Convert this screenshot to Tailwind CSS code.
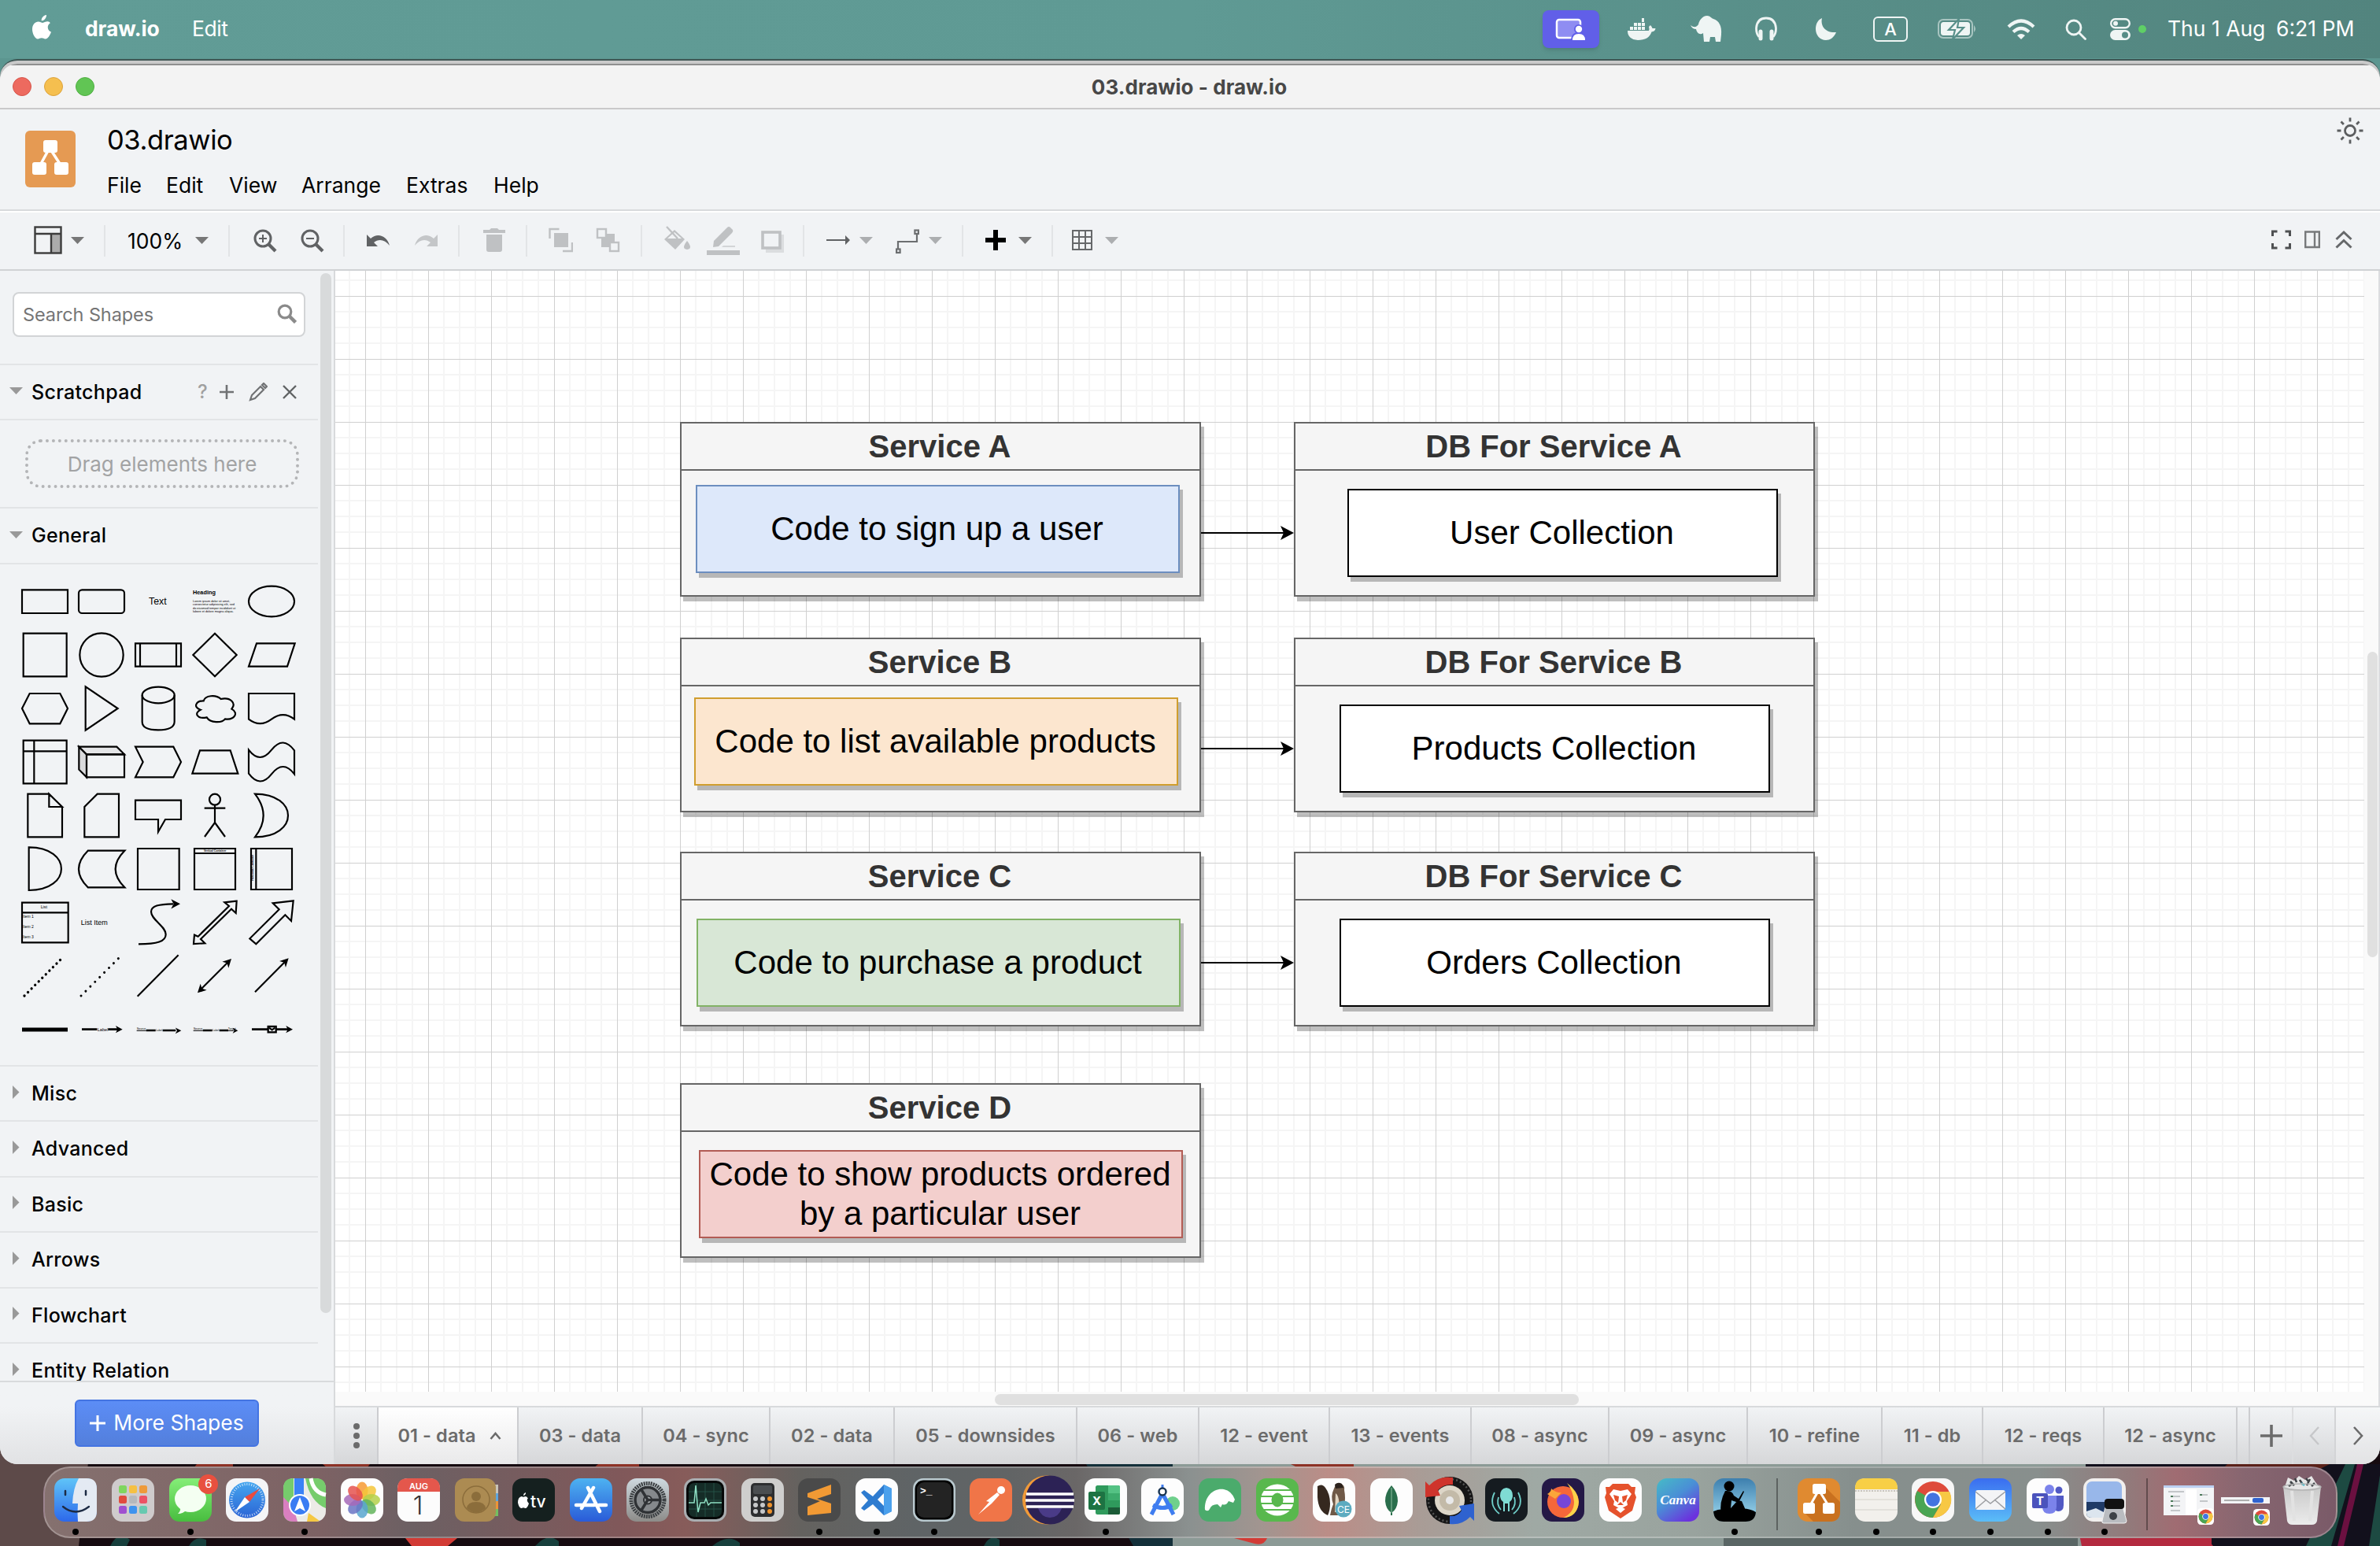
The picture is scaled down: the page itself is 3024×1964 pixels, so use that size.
<!DOCTYPE html>
<html lang="en">
<head>
<meta charset="utf-8">
<title>03.drawio - draw.io</title>
<script src="https://cdn.jsdelivr.net/npm/@tailwindcss/browser@4"></script>
</head>
<body class="relative flex h-[1964px] w-[3024px] flex-col overflow-hidden bg-[#1c0d12] font-['Inter',sans-serif]">

<!-- wallpaper -->
<svg class="absolute left-0 top-0" width="3024" height="1964" viewBox="0 0 3024 1964">
  <rect width="3024" height="1964" fill="#160b10"/>
  <rect width="3024" height="200" fill="#5c9690"/>
  <path d="M0 1700H130L100 1964H0z" fill="#5d4a49"/>
  <path d="M1480 1964V1860H2980V1964z" fill="#8c9a96"/>
  <path d="M1380 1860h110v104h-50z" fill="#14303a"/>
  <path d="M2190 1940h450v24h-450z" fill="#5a6665"/>
  <path d="M2640 1940h170v24h-165z" fill="#b32a3f"/><path d="M2730 1957q25-8 40 7h-40z" fill="#cf4a3a"/>
  <path d="M2650 1860h374v104h-214v-20h-160z" fill="#12101c"/>
  <path d="M2830 1860h130l-20 10h-120z" fill="#5a2119"/>
  <path d="M2930 1964l50-104h12l-30 104zM3010 1964l14-90v90z" fill="#1d4a42"/><path d="M2995 1860h8l-25 104h-8z" fill="#6b1040"/>
  <path d="M2650 1950h150l12 14H2656z" fill="#b32a3f"/>
  <g fill="#173f3c"><path d="M140 1964q10-20 25-8l-4 8zM240 1964q8-14 22-8v8zM680 1964q16-18 30-6v6zM905 1964q20-16 35-4v4zM1250 1964q8-16 20-8v8z"/></g>
  <path d="M515 1954h66l-12 10h-46z" fill="#d23b35"/><path d="M1568 1954h42q-4 10-16 7z" fill="#d23b35"/>
  <path d="M250 1860h46v5h-50zM410 1860h60l-4 5h-50zM760 1860h52v5h-58zM1640 1860h80v5h-70z" fill="#8d3226"/>
</svg>

<!-- menu bar -->
<header class="relative flex h-[74px] shrink-0 items-center bg-linear-to-r from-[#619c96] via-[#5f9a94] to-[#52847e] text-[26.5px] text-white">
  <svg class="ml-[40px] mb-[4px]" width="28" height="34" viewBox="0 0 28 34" fill="#fff"><path d="M19 1c.3 3.600-3 7.500-6.300 7.300C12.300 4.800 15.600 1.200 19 1zM23.800 11.200c-4.600 2.900-3.800 9.400 1.200 11.400-1.500 4.600-4.300 8.900-7.300 8.900-1.900 0-2.500-1.200-4.800-1.200-2.400 0-3.100 1.200-4.800 1.200C4.400 31.500 1 24.600 1 19c0-6 3.800-9.600 7.700-9.600 2.300 0 4 1.500 5.600 1.500 1.500 0 3.600-1.600 6.300-1.600 1.300 0 2.400.7 3.200 1.900z"/></svg>
  <span class="ml-[40px] w-[136px] font-bold tracking-[-0.1px]">draw.io</span>
  <span class="tracking-[-0.4px]">Edit</span>
  <div class="ml-auto mr-[33px] flex items-center">
    <div class="flex h-[48px] w-[72px] items-center justify-center rounded-[8px] bg-[#615fe8] shadow-md">
      <svg width="40" height="30" viewBox="0 0 40 30"><rect x="2" y="3" width="30" height="23" rx="3" fill="#8f8df2" stroke="#fff" stroke-width="2.500"/><circle cx="30" cy="15" r="6" fill="#615fe8"/><path d="M20 30q0-11 10-11t10 11z" fill="#615fe8"/><circle cx="30" cy="15" r="4.200" fill="#fff"/><path d="M22 29q0-8 8-8t8 8z" fill="#fff"/></svg>
    </div>
    <svg class="ml-[36px]" width="36" height="30" viewBox="0 0 36 30" fill="#eff5f4"><path d="M0 17h27q1-2 0-5l2-2q2 2 2.500 4h4q-.5 4-5 4.500Q27 29 13 29 0 28 0 17z"/><path d="M3 12h4v4H3zM8 12h4v4H8zM13 12h4v4h-4zM18 12h4v4h-4zM8 7h4v4H8zM13 7h4v4h-4zM18 7h4v4h-4zM18 1h3v5h-3z"/></svg>
    <svg class="ml-[44px]" width="40" height="34" viewBox="0 0 40 34" fill="#eff5f4"><path d="M0 12c5 4 8 2 10-1 1-5 5-11 11-11 4 0 5 3 8 4 7 2 11 9 10 20l-1 9h-6l-1-6h-6l-1 6h-7l-1-11c-4 3-8 0-9-5-3 0-6-2-7-5z"/></svg>
    <svg class="ml-[42px]" width="28" height="32" viewBox="0 0 28 32" fill="none" stroke="#eff5f4" stroke-width="2.800"><path d="M5 26Q1 21 1.600 14 3 2 14 2t12.400 12Q27 21 23 26"/><path d="M7 19v9M21 19v9" stroke-width="5" stroke-linecap="round"/></svg>
    <svg class="ml-[48px]" width="28" height="30" viewBox="0 0 28 30" fill="#eff5f4"><path d="M9 1C7 10 12 20 27 19 24 26 19 29 14 29 6 29 1 22 1 15 1 8 4 3 9 1z"/></svg>
    <div class="ml-[46px] flex h-[32px] w-[44px] items-center justify-center rounded-[6px] border-[2.500px] border-[#eff5f4] text-[22px] leading-none font-medium">A</div>
    <svg class="ml-[38px]" width="50" height="26" viewBox="0 0 50 26"><rect x="1" y="1" width="43" height="23" rx="6" fill="none" stroke="#a8c5c1" stroke-width="2"/><rect x="4" y="4" width="37" height="17" rx="3.500" fill="#eff5f4"/><path d="M46 8q4 4.500 0 9z" fill="#a8c5c1"/><path d="M27 0L14 14h8l-3 12 14-15h-8z" fill="#eff5f4" stroke="#58908a" stroke-width="2.200"/></svg>
    <svg class="ml-[38px]" width="36" height="27" viewBox="0 0 36 27" fill="none" stroke="#eff5f4" stroke-width="4.200"><path d="M2 10q16-15 32 0M8 16.500q10-9 20 0"/><path d="M18 26l-5-5q5-4 10 0z" fill="#eff5f4" stroke="none"/></svg>
    <svg class="ml-[38px]" width="27" height="27" viewBox="0 0 27 27" fill="none" stroke="#eff5f4" stroke-width="2.800"><circle cx="11" cy="11" r="9"/><path d="M17.500 17.500l8 8" stroke-linecap="round"/></svg>
    <svg class="ml-[30px]" width="26" height="28" viewBox="0 0 26 28"><rect x="1.200" y="1.200" width="23.600" height="11" rx="5.500" fill="none" stroke="#eff5f4" stroke-width="2.400"/><circle cx="7" cy="6.700" r="3" fill="#eff5f4"/><rect y="15" width="26" height="13" rx="6.500" fill="#eff5f4"/><circle cx="19" cy="21.500" r="4" fill="#568c86"/></svg>
    <span class="ml-[10px] h-[10px] w-[10px] rounded-full bg-[#5fcf66]"></span>
    <span class="ml-[27px] w-[138px] whitespace-nowrap">Thu 1 Aug</span>
    <span class="w-[99px] whitespace-nowrap">6:21 PM</span>
  </div>
</header>

<!-- window stacked behind -->
<div class="absolute top-[75px] left-0 h-[300px] w-[3024px] rounded-t-[22px] border-t-2 border-[#3f5654] bg-[#c9c9c9]"></div>

<!-- main window -->
<main class="relative mt-[7px] flex h-[1779px] w-full shrink-0 flex-col overflow-hidden rounded-[22px] bg-[#f1f3f5] text-black">
  <div class="relative flex h-[58px] shrink-0 items-center justify-center border-t-2 border-b-2 border-t-[#8f8f8f] border-b-[#c9c9ca] bg-[#f3f3f3]">
    <div class="absolute left-[16px] flex gap-[16px]">
      <span class="h-[24px] w-[24px] rounded-full border border-[#d6544a] bg-[#ed6a5f]"></span>
      <span class="h-[24px] w-[24px] rounded-full border border-[#dca23b] bg-[#f5bf4f]"></span>
      <span class="h-[24px] w-[24px] rounded-full border border-[#4fae41] bg-[#61c554]"></span>
    </div>
    <span class="mr-[2px] text-[26px] font-bold tracking-[0.050px] text-[#474747]">03.drawio - draw.io</span>
  </div>

  <div class="flex h-[129px] shrink-0 border-b-2 border-[#d8dadc]">
    <div class="mt-[27px] ml-[32px] h-[72px] w-[64px] rounded-[6px] bg-[#e59a53]">
      <svg width="64" height="72" viewBox="0 0 64 72" fill="#fff" stroke="#fff"><path d="M20 42L31 22l13 20" fill="none" stroke-width="3.500"/><rect x="23" y="12" width="18" height="16" rx="3" stroke="none"/><rect x="9" y="40" width="18" height="16" rx="3" stroke="none"/><rect x="37" y="40" width="18" height="16" rx="3" stroke="none"/></svg>
    </div>
    <div class="ml-[40px] flex flex-col">
      <div class="mt-[17px] text-[34.500px] leading-[44px] tracking-[-0.4px]">03.drawio</div>
      <nav class="mt-[17px] flex text-[26.500px] leading-[36px]">
        <span class="w-[75px]">File</span><span class="w-[80px]">Edit</span><span class="w-[92px]">View</span><span class="w-[133px]">Arrange</span><span class="w-[111px]">Extras</span><span>Help</span>
      </nav>
    </div>
    <svg class="mt-[9px] mr-[20px] ml-auto" width="36" height="36" viewBox="0 0 36 36" fill="none" stroke="#5c5e60" stroke-width="2.800"><circle cx="18" cy="18" r="6.500"/><path d="M18 1.500v5M18 29.500v5M1.500 18h5M29.500 18h5M6.500 6.500l3.400 3.400M26.100 26.100l3.400 3.400M29.500 6.500l-3.400 3.400M9.900 26.100l-3.400 3.400"/></svg>
  </div>

  <!-- toolbar -->
  <div class="flex h-[76px] shrink-0 items-center border-t-2 border-b-2 border-t-white border-b-[#d0d2d4] bg-[#f1f3f5]">
    <svg class="ml-[43px]" width="36" height="40" viewBox="0 0 36 40" fill="none" stroke="#3c3c3c" stroke-width="2.400"><rect x="22" y="11" width="12" height="24" fill="#ababab" stroke="none"/><rect x="1.500" y="2.500" width="33" height="33"/><path d="M2 11h32M22 11v24"/></svg>
    <svg class="ml-[11px]" width="17" height="10" viewBox="0 0 17 10" fill="#777"><path d="M0 0h17l-8.500 9z"/></svg>
    <i class="ml-[25px] h-[40px] w-[2px] bg-[#e2e4e6]"></i>
    <span class="ml-[28px] w-[86px] pt-[1px] text-[26.500px]">100%</span>
    <svg width="17" height="10" viewBox="0 0 17 10" fill="#777"><path d="M0 0h17l-8.500 9z"/></svg>
    <i class="ml-[25px] h-[40px] w-[2px] bg-[#e2e4e6]"></i>
    <svg class="ml-[29px]" width="32" height="40" viewBox="0 0 32 40" fill="none" stroke="#606264" stroke-width="3"><circle cx="13" cy="17" r="10"/><path d="M20 24l9 9" stroke-width="4.200"/><path d="M8 17h10M13 12v10" stroke-width="2"/></svg>
    <svg class="ml-[28px]" width="32" height="40" viewBox="0 0 32 40" fill="none" stroke="#606264" stroke-width="3"><circle cx="13" cy="17" r="10"/><path d="M20 24l9 9" stroke-width="4.200"/><path d="M8 17h10" stroke-width="2"/></svg>
    <i class="ml-[23px] h-[40px] w-[2px] bg-[#e2e4e6]"></i>
    <svg class="ml-[27px]" width="32" height="40" viewBox="0 0 32 40" fill="#606264"><path d="M1 12v15h14l-5-5c6-5 14-4 20 4C27 14 15 9 6 17z"/></svg>
    <svg class="ml-[28px]" width="32" height="40" viewBox="0 0 32 40" fill="#c4c6c8"><path d="M31 12v15H17l5-5c-6-5-14-4-20 4C5 14 17 9 26 17z"/></svg>
    <i class="ml-[25px] h-[40px] w-[2px] bg-[#e2e4e6]"></i>
    <svg class="ml-[28px]" width="32" height="40" viewBox="0 0 32 40" fill="#bfc1c3"><path d="M2 6h8l2-2h8l2 2h8v4H2zM6 12h20v19q0 3-3 3H9q-3 0-3-3z"/></svg>
    <i class="ml-[24px] h-[40px] w-[2px] bg-[#e2e4e6]"></i>
    <svg class="ml-[26px]" width="32" height="40" viewBox="0 0 32 40" fill="none" stroke="#bfc1c3" stroke-width="2.400"><rect x="8" y="10" width="18" height="18" fill="#bfc1c3" stroke="none"/><path d="M2.500 17V5h12M31 22v11H19"/></svg>
    <svg class="ml-[28px]" width="32" height="40" viewBox="0 0 32 40" fill="none" stroke="#bfc1c3" stroke-width="2.400"><rect x="8" y="11" width="17" height="17" fill="#bfc1c3" stroke="none"/><rect x="3" y="5" width="11" height="11" fill="#f1f3f5"/><rect x="19" y="22" width="11" height="11" fill="#f1f3f5"/></svg>
    <i class="ml-[26px] h-[40px] w-[2px] bg-[#e2e4e6]"></i>
    <svg class="ml-[26px]" width="36" height="40" viewBox="0 0 36 40" fill="#bfc1c3"><path d="M15 6l13 12-12 13L2 18z"/><path d="M15 9l9 8H6z" fill="#f1f3f5"/><path d="M5 2l14 15" stroke="#bfc1c3" stroke-width="2.400"/><path d="M31 20q8 10 0 11-8-1 0-11z"/></svg>
    <svg class="ml-[20px]" width="42" height="40" viewBox="0 0 42 40" fill="#bfc1c3"><path d="M8 28l1-8L26 3q2-2 4 0l3 3q1 2-1 4L15 27z"/><path d="M21 26h15v2H19z" opacity=".6"/><path d="M0 32h42v6H0z"/></svg>
    <svg class="ml-[25px]" width="32" height="40" viewBox="0 0 32 40"><path d="M8 12h23v23H8z" fill="#dbdddf"/><rect x="4" y="9" width="22" height="20" fill="#f1f3f5" stroke="#bfc1c3" stroke-width="3.600"/></svg>
    <i class="ml-[23px] h-[40px] w-[2px] bg-[#e2e4e6]"></i>
    <svg class="ml-[28px]" width="30" height="40" viewBox="0 0 30 40" fill="#606264"><path d="M0 18h24v2H0zM24 13l6 6-6 6z"/></svg>
    <svg class="ml-[12px]" width="17" height="10" viewBox="0 0 17 10" fill="#acaeb0"><path d="M0 0h17l-8.500 9z"/></svg>
    <svg class="ml-[29px]" width="30" height="40" viewBox="0 0 30 40" fill="none" stroke="#6c6e70" stroke-width="2.200"><path d="M3 30V21h24v-9"/><rect x="1.100" y="30.500" width="4.500" height="4.500"/><rect x="24.400" y="6.500" width="4.500" height="4.500"/></svg>
    <svg class="ml-[12px]" width="17" height="10" viewBox="0 0 17 10" fill="#acaeb0"><path d="M0 0h17l-8.500 9z"/></svg>
    <i class="ml-[25px] h-[40px] w-[2px] bg-[#e2e4e6]"></i>
    <svg class="ml-[28px]" width="26" height="40" viewBox="0 0 26 40" fill="#000"><path d="M0 16h10V6h6v10h10v6H16v10h-6V22H0z"/></svg>
    <svg class="ml-[16px]" width="17" height="10" viewBox="0 0 17 10" fill="#777"><path d="M0 0h17l-8.500 9z"/></svg>
    <i class="ml-[25px] h-[40px] w-[2px] bg-[#e2e4e6]"></i>
    <svg class="ml-[24px]" width="26" height="40" viewBox="0 0 26 40" fill="none" stroke="#66686a" stroke-width="2"><path d="M1 7h24v24H1zM1 15h24M1 23h24M9 7v24M17 7v24"/></svg>
    <svg class="ml-[16px]" width="17" height="10" viewBox="0 0 17 10" fill="#acaeb0"><path d="M0 0h17l-8.500 9z"/></svg>
    <svg class="ml-auto" width="25" height="40" viewBox="0 0 25 40" fill="none" stroke="#4e5052" stroke-width="3"><path d="M1.500 14V8h6M17.500 8h6v6M23.500 23v6h-6M7.500 29h-6v-6"/></svg>
    <svg class="ml-[17px]" width="20" height="40" viewBox="0 0 20 40" fill="none" stroke="#77797b" stroke-width="2.400"><path d="M1.200 8.500h17.600v19.500H1.200zM13 8v20"/></svg>
    <svg class="ml-[19px] mr-[35px]" width="22" height="40" viewBox="0 0 22 40" fill="none" stroke="#66686a" stroke-width="3"><path d="M1.500 18L11 9l9.500 9M1.500 28.500L11 19.500l9.500 9"/></svg>
  </div>

  <div class="flex min-h-0 flex-1">
    <!-- sidebar -->
    <aside class="flex w-[426px] shrink-0 flex-col border-r-2 border-[#d8dadc]">
      <div class="relative h-[1410px] overflow-hidden">
        <div class="w-[404px]">
          <div class="h-[118px] px-[16px] pt-[27px]">
            <div class="flex h-[57px] w-[372px] items-center justify-between rounded-[8px] border-2 border-[#d2d4d6] bg-white pr-[9px] pl-[11px] text-[23.500px] text-[#757575]">
              <span class="tracking-[-0.1px]">Search Shapes</span>
              <svg class="mb-[2px]" width="25" height="25" viewBox="0 0 25 25" fill="none" stroke="#8a8a8a" stroke-width="3.200"><circle cx="10" cy="10" r="7.800"/><path d="M15.500 15.500l8 8" stroke-width="4.500"/></svg>
            </div>
          </div>
          <div class="flex h-[70px] items-center border-t-2 border-[#e2e4e6]">
            <svg class="ml-[12px] mb-[2px]" width="17" height="10" viewBox="0 0 17 10" fill="#999"><path d="M0 0h17l-8.500 9z"/></svg>
            <span class="ml-[11px] w-[211px] pt-[1px] text-[25px] font-medium tracking-[0.3px]">Scratchpad</span>
            <span class="w-[28px] text-[24px] font-medium text-[#a0a0a0]">?</span>
            <svg width="18" height="18" viewBox="0 0 18 18" stroke="#707274" stroke-width="2.600"><path d="M9 0v18M0 9h18"/></svg>
            <svg class="ml-[19px]" width="24" height="24" viewBox="0 0 24 24" fill="none" stroke="#707274" stroke-width="2.200"><path d="M2 22l2-6L15 5l4 4L8 20zM17 3l2-2 4 4-2 2z"/></svg>
            <svg class="ml-[19px]" width="18" height="18" viewBox="0 0 18 18" stroke="#606264" stroke-width="2.400"><path d="M1 1l16 16M17 1L1 17"/></svg>
          </div>
          <div class="h-[112px] border-t-2 border-[#e2e4e6] pt-[24px] pl-[32px]">
            <div class="flex h-[62px] w-[348px] items-center justify-center rounded-[20px] border-4 border-dotted border-[#b4b5b7] pt-[1px] text-[26px] text-[#a2a3a4]">Drag elements here</div>
          </div>
          <div class="flex h-[71px] items-center border-t-2 border-[#e2e4e6]">
            <svg class="ml-[12px] mb-[2px]" width="17" height="10" viewBox="0 0 17 10" fill="#999"><path d="M0 0h17l-8.500 9z"/></svg>
            <span class="ml-[11px] pt-[1px] text-[25px] font-medium tracking-[0.3px]">General</span>
          </div>
          <div class="h-[638px] border-t-2 border-[#e2e4e6] pt-[13px] pl-[21px]">
            <div id="palette" class="grid w-[360px] grid-cols-5"></div>
          </div>
          <div id="sections"></div>
        </div>
        <div class="absolute top-[3px] left-[407px] h-[1321px] w-[14px] rounded-full bg-[#d8dadb]"></div>
      </div>
      <div class="flex flex-1 justify-center border-t-2 border-[#d8dadc] bg-linear-to-b from-[#f1f3f5] from-30% to-[#e1e2e4] pt-[22px]">
        <div class="flex h-[60px] w-[234px] items-center justify-center gap-[10px] rounded-[6px] border-2 border-[#4474e2] bg-linear-to-b from-[#5c8df6] to-[#537fdc] text-[26.500px] whitespace-nowrap text-white"><svg width="20" height="20" viewBox="0 0 20 20" stroke="#fff" stroke-width="3"><path d="M10 0v20M0 10h20"/></svg><span>More Shapes</span></div>
      </div>
    </aside>

    <!-- canvas column -->
    <section class="flex min-w-0 flex-1 flex-col">
      <div class="relative h-[1442px] shrink-0 overflow-hidden bg-[#fafafa]">
        <svg class="absolute top-0 left-0" width="2578" height="1424" viewBox="426 344 2578 1424">
          <defs>
            <pattern id="grid" x="864" y="536" width="80" height="80" patternUnits="userSpaceOnUse">
              <path d="M19 0h2v80h-2zM39 0h2v80h-2zM59 0h2v80h-2zM0 19h80v2H0zM0 39h80v2H0zM0 59h80v2H0z" fill="#f5f5f5"/>
              <path d="M0 0h80v1H0zM0 0h1v80H0z" fill="#d0d0d0"/>
            </pattern>
          </defs>
          <rect x="426" y="344" width="2578" height="1424" fill="#fff"/>
          <rect x="426" y="344" width="2578" height="1424" fill="url(#grid)"/>
          <g stroke="#000" stroke-width="2"><path d="M1526 677h108M1526 951h108M1526 1223h108"/></g>
          <g fill="#000"><path d="M1644 677l-17 9 4-9-4-9zM1644 951l-17 9 4-9-4-9zM1644 1223l-17 9 4-9-4-9z"/></g>
        </svg>
        <div id="diagram" class="font-['Liberation_Sans',sans-serif]"></div>
        <div class="absolute top-[1427px] left-[838px] h-[14px] w-[742px] rounded-full bg-[#e0e0e0]"></div>
        <div class="absolute top-[484px] left-[2582px] h-[388px] w-[13px] rounded-full bg-[#e0e0e0]"></div>
        <div class="absolute top-0 right-0 h-full w-[2px] bg-[#dcdddf]"></div>
      </div>
      <div class="flex flex-1 border-t-2 border-[#d8dadc] bg-linear-to-b from-[#f1f3f5] to-[#d6d7d9] text-[23.500px] font-semibold text-[#6b6b6b]">
        <div class="flex w-[55px] flex-col items-center justify-center gap-[4px] border-r-2 border-[#cccdd0]">
          <i class="h-[8px] w-[8px] rounded-full bg-[#6b6b6b]"></i><i class="h-[8px] w-[8px] rounded-full bg-[#6b6b6b]"></i><i class="h-[8px] w-[8px] rounded-full bg-[#6b6b6b]"></i>
        </div>
        <div id="tabs" class="flex"></div>
        <div class="w-[16px] border-r-2 border-[#cccdd0]"></div>
        <div class="flex w-[55px] items-center justify-center border-r-2 border-[#dddee0]"><svg width="28" height="28" viewBox="0 0 28 28" stroke="#6b6b6b" stroke-width="3.600"><path d="M14 0v28M0 14h28"/></svg></div>
        <div class="flex w-[54px] items-center justify-center border-r-2 border-[#d3d4d6]"><svg width="13" height="24" viewBox="0 0 13 24" fill="none" stroke="#c6c7c9" stroke-width="2.400"><path d="M12 1L2 12l10 11"/></svg></div>
        <div class="flex flex-1 items-center justify-center bg-white/30"><svg width="13" height="24" viewBox="0 0 13 24" fill="none" stroke="#6b6b6b" stroke-width="2.600"><path d="M1 1l10 11L1 23"/></svg></div>
      </div>
    </section>
  </div>
</main>

<!-- dock -->
<footer id="dock" class="relative mt-[3px] ml-[55px] flex h-[91px] w-[2915px] shrink-0 items-start rounded-[34px] border-2 border-white/25 bg-[linear-gradient(90deg,#85716f_0%,#7d6264_12%,#6c6063_16%,#80585a_25%,#875c5a_28%,#64625f_33%,#5f6466_38%,#616465_42%,#6a6767_45%,#8b9190_50%,#a19590_53%,#bb8d87_56%,#a99c96_60%,#9fa9a4_65%,#99a39e_72%,#868f8d_79%,#888f8d_87%,#927a7b_91%,#a06c72_93%,#876670_96%,#7a5a68_100%)] pt-[13px] pl-[3px]"></footer>

<script>
/* General palette: each entry is drawn in a 216x204 cell of a five column sheet */
const A = (x, y, a, s = 26) => `<path transform="translate(${x} ${y}) rotate(${a})" d="M0 0L${-s * 1.25} ${s * .65}L${-s * .9} 0L${-s * 1.25} ${-s * .65}z" fill="#000" stroke="none"/>`;
const T = (x, y, s, t, e = '') => `<text x="${x}" y="${y}" font-size="${s}" fill="#000" stroke="none" ${e}>${t}</text>`;
const shapes = [
  '<path d="M84 58h174v89H84z"/>',
  '<rect x="300" y="58" width="174" height="89" rx="13"/>',
  T(567, 114, 37, 'Text'),
  T(735, 75, 22, 'Heading', 'font-weight="700"') + T(735, 105, 11.5, 'Lorem ipsum dolor sit amet,') + T(735, 118, 11.5, 'consectetur adipisicing elit, sed') + T(735, 131, 11.5, 'do eiusmod tempor incididunt ut') + T(735, 144, 11.5, 'labore et dolore magna aliqua.'),
  '<ellipse cx="1035" cy="102" rx="87" ry="58"/>',
  '<path d="M89 224h165v164H89z"/>',
  '<circle cx="387" cy="306" r="83"/>',
  '<path d="M516 262h174v88H516zM534 262v88M672 262v88"/>',
  '<path d="M819 224l83 82-83 82-83-82z"/>',
  '<path d="M978 262h146l-29 88H948z"/>',
  '<path d="M84 510l29-57h116l29 57-29 58H113z"/>',
  '<path d="M326 427v166l123-83z"/>',
  '<path d="M542 459v102q0 31 61 31t62-31V459"/><ellipse cx="603.500" cy="459" rx="61.500" ry="31"/>',
  '<path d="M776 481C748 480 734 505 764 515 738 528 752 552 788 544 802 566 846 566 858 550 892 555 912 528 883 512 902 490 878 466 842 474 822 456 782 460 776 481z"/>',
  '<path d="M948 453h174v98q-43-33-87 0t-87 0z"/>',
  '<path d="M89 632h165v164H89zM130 632v164M89 673h165"/>',
  '<path d="M301 656l29 29v87l-29-29z" fill="#d9dadc"/><path d="M301 656h144l29 29H330z" fill="#e4e5e7"/><path d="M330 685h144v87H330z"/>',
  '<path d="M516 656h145l29 58-29 58H516l29-58z"/>',
  '<path d="M762 670h116l29 88H733z"/>',
  '<path d="M948 668q43 56 87 0t87 2v90q-43-56-87 0t-87-2z"/>',
  '<path d="M106 836h81l50 49v115H106zM187 836v49h50z"/>',
  '<path d="M371 836h82v164H322V885z"/>',
  '<path d="M516 860h174v73h-60l-27 47v-47h-87z"/>',
  '<circle cx="819" cy="857" r="21"/><path d="M819 878v67M779 890h80M819 945l-39 54M819 945l39 54"/>',
  '<path d="M972 836C1140 836 1140 1000 972 1000Q1036 918 972 836z"/>',
  '<path d="M110 1039C275 1039 275 1203 110 1203z"/>',
  '<path d="M335 1052h140q-70 70 0 140H335q-70-70 0-140z"/>',
  '<path d="M525 1044h158v156H525z"/>',
  '<path d="M741 1044h156v156H741zM741 1062h156"/>' + T(777, 1056, 10, 'Vertical Container', 'font-weight="700"'),
  '<path d="M957 1044h156v156H957zM976 1044v156"/>' + T(0, 0, 10, 'Horizontal Container', 'font-weight="700" transform="translate(967 1166) rotate(-90)"'),
  '<path d="M84 1250h176v152H84zM84 1288h176"/>' + T(155, 1271, 16, 'List') + T(87, 1308, 15, 'Item 1') + T(87, 1347, 15, 'Item 2') + T(87, 1386, 15, 'Item 3'),
  T(308, 1335, 27, 'List Item'),
  '<path d="M528 1408C600 1408 632 1398 632 1371 632 1340 576 1315 576 1285 576 1262 606 1256 660 1255"/>' + A(687, 1255, 0, 28),
  '<path d="M902 1244l-46 5 17 14-118 116-14-6-3 34 43-2-16-16 117-115 17 16z"/>',
  '<path d="M1118 1243l-78 9 24 24-112 111 24 21 111-111 23 23z"/>',
  '<path d="M93 1605L243 1455" stroke-width="10" stroke-linecap="round" stroke-dasharray=".1 19.200"/>',
  '<path d="M309 1605L452 1462" stroke-width="9" stroke-linecap="round" stroke-dasharray=".1 25"/>',
  '<path d="M524 1607L680 1450"/>',
  '<path d="M765 1581L870 1476"/>' + A(882, 1464, -45) + A(753, 1594, 135),
  '<path d="M972 1591L1088 1474"/>' + A(1100, 1462, -45),
  '<path d="M84 1734h174" stroke-width="15"/>',
  '<path d="M312 1733h58M412 1733h40" stroke-width="8"/>' + A(467, 1733, 0, 21) + T(371, 1740, 17, 'Label'),
  '<path d="M521 1738h36" stroke-width="3"/><path d="M557 1737h36M620 1737h50" stroke-width="8"/>' + A(691, 1738, 0, 18) + T(521, 1734, 11, 'Source') + T(594, 1740, 10, 'Label'),
  '<path d="M737 1738h36M870 1738h20" stroke-width="3"/><path d="M773 1737h36M836 1737h34" stroke-width="8"/>' + A(907, 1738, 0, 16) + T(737, 1734, 11, 'Source') + T(810, 1740, 10, 'Label') + T(869, 1734, 11, 'Target'),
  '<path d="M960 1733h140" stroke-width="8"/>' + A(1116, 1733, 0, 21) + '<rect x="1022" y="1722" width="30" height="22" fill="#f1f3f5" stroke-width="7"/><path d="M1026 1727l11 8 11-8"/>'
];
document.getElementById('palette').innerHTML = shapes.map((s, i) =>
  `<svg width="72" height="68" viewBox="${63 + 216 * (i % 5)} ${204 * Math.floor(i / 5)} 216 204" fill="none" stroke="#000" stroke-width="6.500" font-family="Liberation Sans">${s}</svg>`).join('');

document.getElementById('sections').innerHTML = ['Misc', 'Advanced', 'Basic', 'Arrows', 'Flowchart', 'Entity Relation'].map(t =>
  `<div class="flex h-[70.400px] items-center border-t-2 border-[#e2e4e6]"><svg class="ml-[16px] mb-[4px]" width="9" height="17" viewBox="0 0 9 17" fill="#999"><path d="M0 0v17l8.500-8.500z"/></svg><span class="ml-[15px] pt-[1px] text-[25px] font-medium tracking-[0.3px] whitespace-nowrap">${t}</span></div>`).join('');

/* Diagram containers: x, y, title, then the node inside: x, y, width, fill, stroke, label */
const boxes = [
  [864, 536, 'Service A', 884, 616, 615, '#dde8fa', '#6c8ebf', 'Code to sign up a user'],
  [864, 810, 'Service B', 882, 886, 615, '#fce6cf', '#d09e2f', 'Code to list available products'],
  [864, 1082, 'Service C', 885, 1167, 615, '#d8e7d6', '#82b366', 'Code to purchase a product'],
  [864, 1376, 'Service D', 888, 1461, 615, '#f3cfcd', '#b25c54', 'Code to show products ordered<br>by a particular user'],
  [1644, 536, 'DB For Service A', 1712, 621, 547, '#ffffff', '#000000', 'User Collection'],
  [1644, 810, 'DB For Service B', 1702, 895, 547, '#ffffff', '#000000', 'Products Collection'],
  [1644, 1082, 'DB For Service C', 1702, 1167, 547, '#ffffff', '#000000', 'Orders Collection']
];
document.getElementById('diagram').innerHTML = boxes.map(([x, y, t, ix, iy, iw, f, s, l]) =>
  `<div class="absolute h-[222px] w-[662px] border-2 border-[#666] bg-[#f5f5f5] shadow-[4px_6px_0_rgba(0,0,0,0.25)]" style="left:${x - 426}px;top:${y - 344}px"><div class="flex h-[60px] items-center justify-center border-b-2 border-[#666] pr-[2px] text-[40px] leading-[48px] font-bold text-[#333]">${t}</div></div>
   <div class="absolute flex h-[112px] items-center justify-center border-2 pr-[2px] text-center text-[42px] leading-[50px] whitespace-nowrap text-black shadow-[4px_6px_0_rgba(0,0,0,0.25)]" style="left:${ix - 426}px;top:${iy - 344}px;width:${iw}px;background:${f};border-color:${s}">${l}</div>`).join('');

/* Page tabs: label and width */
document.getElementById('tabs').innerHTML = [['01 - data', 178], ['03 - data', 158], ['04 - sync', 162], ['02 - data', 158], ['05 - downsides', 232], ['06 - web', 155], ['12 - event', 166], ['13 - events', 180], ['08 - async', 175], ['09 - async', 176], ['10 - refine', 171], ['11 - db', 128], ['12 - reqs', 154], ['12 - async', 169]].map(([t, w], i) =>
  i ? `<div class="flex items-center justify-center border-r-2 border-[#cccdd0] tracking-[0.1px] whitespace-nowrap" style="width:${w}px">${t}</div>`
    : `<div class="flex items-center justify-center gap-[17px] border-r-2 border-[#cccdd0] bg-linear-to-b from-white to-[#e9e9ea] pl-[4px] tracking-[0.1px] whitespace-nowrap" style="width:${w}px">${t}<svg width="15" height="10" viewBox="0 0 15 10" fill="none" stroke="#6b6b6b" stroke-width="2.600"><path d="M1.500 9l6-7 6 7"/></svg></div>`).join('');

/* Dock icons */
const tile = f => `<rect width="54" height="55" rx="13" fill="${f}"/>`;
const chrome = `<circle cx="27" cy="27" r="23" fill="#de4b3b"/><path d="M27 27L7 16A23 23 0 0 0 27 50l10-17z" fill="#4aa553"/><path d="M27 17h21a23 23 0 0 1-21 33l10-17z" fill="#f7c844"/><circle cx="27" cy="27" r="11" fill="#fff"/><circle cx="27" cy="27" r="8.800" fill="#4274e0"/>`;
const petal = ['#f79a33', '#f4c63a', '#b4d04a', '#63b45c', '#58a6cf', '#6a74c4', '#a668b8', '#e5524f'];
const dots = ['#7fd65f', '#f5c043', '#ee9a3a', '#e14a3e', '#b5b8bc', '#ec5265', '#a04fd0', '#3f93ee', '#67c9b0'];
const apps = [
  [1, tile('url(#fi)') + '<path d="M31 0h10q13 0 13 13v29q0 13-13 13H30q-1-11 0-23h-7Q24 12 31 0z" fill="#e4eaf3"/><path d="M14 16v5M40 16v5" stroke="#1d2b44" stroke-width="2.500" stroke-linecap="round"/><path d="M11 36q16 13 33 0" fill="none" stroke="#1d2b44" stroke-width="2.300" stroke-linecap="round"/>'],
  [0, tile('#cfcbcc') + dots.map((c, i) => `<rect x="${9 + 13 * (i % 3)}" y="${9 + 13 * Math.floor(i / 3)}" width="10" height="10" rx="2.500" fill="${c}"/>`).join('')],
  [1, tile('url(#gr)') + '<ellipse cx="27" cy="26" rx="20" ry="17" fill="#f4fff2"/><path d="M14 36q1 6-3 9 7 0 11-5z" fill="#f4fff2"/>'],
  [0, tile('#f4f5f7') + '<circle cx="27" cy="27.500" r="23" fill="url(#sa)"/><circle cx="27" cy="27.500" r="20" fill="none" stroke="#fff" stroke-width="3" stroke-dasharray="1 2" opacity=".7"/><path d="M43 13L24 24l6 6z" fill="#ea4b3f"/><path d="M11 43l13-19 6 6z" fill="#fff"/>'],
  [1, tile('#ecebe7') + '<path d="M28 0h13q13 0 13 13v25Q34 30 28 0z" fill="#76cc6c"/><path d="M0 13Q0 0 13 0v55Q0 55 0 42z" fill="#76cc6c"/><path d="M0 24q14 12 18 31h-5Q0 55 0 42z" fill="#d97fc0"/><path d="M32 44l14 10q-3 1-5 1H30z" fill="#f5c843"/><path d="M14 0h12v24H14z" fill="#3a82f6"/><path d="M35 0q3 18 19 21" fill="none" stroke="#fff" stroke-width="5"/><circle cx="21" cy="34" r="13" fill="#3a7cf3" stroke="#fff" stroke-width="2"/><path d="M21 24l7 18-7-4-7 4z" fill="#fff"/>'],
  [0, tile('#fdfdfd') + petal.map((c, i) => `<ellipse cx="27" cy="15.500" rx="7.500" ry="11" fill="${c}" opacity=".85" transform="rotate(${i * 45} 27 27.500)"/>`).join('')],
  [0, tile('#fcfcfc') + '<path d="M0 17V13Q0 0 13 0h28q13 0 13 13v4z" fill="#e4574c"/><text x="27" y="14" font-size="11" font-weight="600" text-anchor="middle" fill="#fff">AUG</text><text x="26" y="46" font-size="32" font-weight="300" text-anchor="middle" fill="#333">1</text>'],
  [0, '<rect x="46" y="8" width="9" height="11" fill="#c9c4b8"/><rect x="46" y="19" width="9" height="10" fill="#5fa6dc"/><rect x="46" y="29" width="9" height="10" fill="#ec9438"/><rect x="46" y="39" width="9" height="9" fill="#74bf62"/><rect width="52" height="55" rx="12" fill="#ac8b52"/><circle cx="27" cy="27" r="17" fill="none" stroke="#8b6d3b" stroke-width="1.500"/><circle cx="27" cy="23" r="6" fill="#8b6d3b"/><path d="M15 38q1-8 12-8t12 8q-12 11-24 0z" fill="#8b6d3b"/>'],
  [0, tile('#15201f') + '<path d="M17 18q.3 3-3 4 0-3 3-4zM20 25q-3 3 1 7-2 6-4.500 6l-2.500-.7-2.500.7q-3 0-4.500-7 0-7 4.500-8l2.500.8 2.500-.8q2 0 3 2z" fill="#fff"/><text x="23" y="37" font-size="21" font-weight="500" fill="#fff">tv</text>'],
  [0, tile('url(#as)') + '<path d="M23 12l15 30M30 12L15 38M8 34h23M37 34h9" stroke="#fff" stroke-width="4.500" stroke-linecap="round"/>'],
  [0, tile('url(#se)') + '<circle cx="27" cy="27.500" r="21" fill="none" stroke="#3c4043" stroke-width="5" stroke-dasharray="2 1"/><circle cx="27" cy="27.500" r="16" fill="#85898c" stroke="#2f3235" stroke-width="3.500"/><circle cx="27" cy="27.500" r="5" fill="#a9adaf" stroke="#2f3235" stroke-width="2"/><path d="M27 27.500h16M27 27.500L18 13M27 27.500L18 42" stroke="#2f3235" stroke-width="3.500"/>'],
  [0, tile('#a9adb0') + '<rect x="3" y="3" width="48" height="49" rx="10" fill="#050808"/><rect x="6" y="6" width="42" height="43" rx="7" fill="#152c27"/><path d="M16 6v43M27 6v43M38 6v43M6 17h42M6 28h42M6 39h42" stroke="#29594c" stroke-width=".8"/><path d="M6 31h7l2-22 3 34 3-12h5l2-5 3 8 3-3h14" fill="none" stroke="#8fe0c4" stroke-width="1.500"/>'],
  [0, tile('#cfcecd') + '<rect x="12" y="6" width="30" height="43" rx="5" fill="#2d2e30"/><rect x="15" y="9" width="24" height="11" rx="2" fill="#4b4e51"/>' + [0, 1, 2].map(r => [0, 1, 2].map(c => `<circle cx="${18 + 9 * c}" cy="${26 + 8 * r}" r="3" fill="${c == 2 ? '#f0932c' : '#c7c8ca'}"/>`).join('')).join('')],
  [1, tile('#4a4a4a') + '<path d="M12 19L42 8v12L24 26l18 6v12L12 47V36l16-7-16-5z" fill="#f29a34"/>'],
  [1, tile('#fdfdfd') + '<path d="M36 8l10 5v29l-10 5-14-14-11 8-4-3 9-10-9-10 4-3 11 8zM36 19l-8 8 8 8z" fill="#2e7cd0" fill-rule="evenodd"/><path d="M36 8l10 5v29l-10 5z" fill="#4aa0ec"/>'],
  [1, tile('#b9c9cf') + '<rect x="2.500" y="2.500" width="49" height="50" rx="11" fill="#000"/><rect x="5" y="5" width="44" height="45" rx="9" fill="#232323"/><text x="9" y="20" font-size="13" font-family="Liberation Mono" font-weight="700" fill="#fff">&gt;_</text>'],
  [0, tile('#f07548') + '<circle cx="40" cy="15" r="5" fill="#fff"/><path d="M35 18L21 29l4 1-14 16 17-14 10-11z" fill="#fff"/>'],
  [0, '<circle cx="25" cy="27.500" r="31" fill="#f19a38"/><circle cx="29" cy="27.500" r="31" fill="#2c2255"/><path d="M-1 20h60M-2 28h62M-1 36h60" stroke="#fff" stroke-width="3.500"/><path d="M14 38h30q-4 12-15 12T14 38z" fill="#4a3b87"/>'],
  [1, tile('#fdfdfd') + '<rect x="14" y="9" width="31" height="37" rx="2.500" fill="#2f9a5c"/><path d="M30 9h13q2 0 2 2v8H30z" fill="#54c284"/><path d="M30 19h15v9H30z" fill="#3cab6c"/><path d="M30 37h15v7q0 2-2 2H30z" fill="#1b5b37"/><rect x="5" y="17" width="21" height="23" rx="2" fill="#1d7343"/><text x="15.500" y="34" font-size="15" font-weight="700" text-anchor="middle" fill="#fff">X</text>'],
  [0, tile('#fdfdfd') + '<circle cx="40" cy="32" r="9" fill="#6fd08c"/><path d="M27 19L13 46M27 19l14 27M15 34q12 7 24 0" fill="none" stroke="#3f7df0" stroke-width="5"/><path d="M27 8v6" stroke="#3f7df0" stroke-width="3"/><circle cx="27" cy="17" r="4.500" fill="#fff" stroke="#1b3653" stroke-width="2.500"/>'],
  [0, tile('#4bab6c') + '<path d="M8 40C7 22 20 12 32 14q10 2 14 13l-2 4-6-2q-3 6-8 4l-2 4-4-4q-8 0-10 6-2 4-6 1z" fill="#fff"/>'],
  [0, tile('#58b84d') + '<ellipse cx="27" cy="27.500" rx="21" ry="20" fill="#fff"/><ellipse cx="27" cy="27.500" rx="7.500" ry="9" fill="#58b84d"/><path d="M4 15h46M4 23h46M4 32h46M4 40h46" stroke="#58b84d" stroke-width="2.200"/>'],
  [0, tile('#fdfdfd') + '<path d="M6 10q6-4 10 2 6 8 6 20 0 9-3 15Q7 42 6 24z" fill="#35281f"/><path d="M27 13q2-7 8-6 6 1 5 8 2 10 0 20l-4 12H22q2-10 4-14-4-10 1-20z" fill="#6f5947"/><path d="M28 8q4-4 9-1l2 5-10 1z" fill="#2b211b"/><path d="M29 19q6 4 4 24h-5z" fill="#e3d6c2"/><circle cx="39" cy="39" r="10.500" fill="#5cabc0"/><text x="39" y="43.500" font-size="12" text-anchor="middle" fill="#fff">CE</text>'],
  [0, tile('#fdfdfd') + '<path d="M27 9q8 9 8 20-1 10-7 14v4h-2v-4q-6-4-7-14 0-11 8-20z" fill="#2a6e4c"/><path d="M27 12v32" stroke="#8fbfa0" stroke-width="1"/>'],
  [0, '<circle cx="28" cy="28" r="30" fill="#151516"/><circle cx="28" cy="28" r="27" fill="none" stroke="#555" stroke-width="2.500" stroke-dasharray="2 3"/><circle cx="28" cy="28" r="19" fill="#ddd6c8"/><circle cx="28" cy="28" r="13" fill="#c3baa8"/><circle cx="28" cy="28" r="5" fill="#e9e9ea"/><path d="M-3 4l5 5Q14-4 32-1v9Q20 7 13 15l3 7-19 2z" fill="#cf342c"/><path d="M59 54l-5-5q-11 11-26 9V48q10 1 15-7l-3-6 19-3z" fill="#2f62cf"/>'],
  [0, tile('#151b20') + '<path d="M27 12q8 1 8 10 0 5-4 8v12h-2V32h-4v10h-2V30q-4-3-4-8 0-9 8-10z" fill="#7fdcd4"/><path d="M12 18Q4 34 18 45M42 18q8 16-6 27M17 24q-3 9 3 16M37 24q3 9-3 16" fill="none" stroke="#6fcfc9" stroke-width="1.800"/>'],
  [0, tile('#241846') + '<circle cx="27" cy="30" r="20" fill="#f5673a"/><path d="M32 6q14 10 15 24-2 20-20 20 14-6 14-20Q40 16 32 6z" fill="#fcd34a"/><path d="M7 20q5-3 5-7 6 6 13 5l-8 8z" fill="#fba53a"/><circle cx="28" cy="29" r="9" fill="#7746d8"/>'],
  [0, tile('#fdfdfd') + '<path d="M17 7h20l4 4h5l-1 8 2 5-5 17-15 10-15-10L7 24l2-5-1-8h5z" fill="#e5522c"/><path d="M27 16l9-2 5 6-6 9 1 5-9 5-9-5 1-5-6-9 5-6z" fill="#fff"/><path d="M18 21l7 2-1 8-4-3zM36 21l-7 2 1 8 4-3zM27 30l4 4h-8z" fill="#e5522c"/><path d="M21 39l6-3 6 3-6 5z" fill="#fff"/>'],
  [0, tile('url(#ca)') + '<text x="27" y="33" font-size="17" font-style="italic" font-weight="600" font-family="Liberation Serif" text-anchor="middle" fill="#fff">Canva</text>'],
  [1, tile('url(#ki)') + '<path d="M0 42q10-5 22-1 20-6 32 2-1 12-13 12H13Q1 55 0 42z" fill="#000"/><circle cx="20" cy="10" r="6.500" fill="#000"/><path d="M15 16q9-1 11 6l6 4 6-10 1 1-7 14-9-3-1 10 9-10 5 1 7 16H10q-3-14 5-29z" fill="#000"/>'],
  [1, tile('#e08a30') + '<path d="M34 10l20 20v12q0 13-13 13H20L8 43z" fill="#c9711f"/><path d="M15 36L27 15l13 21" fill="none" stroke="#fff" stroke-width="3"/><rect x="19" y="7" width="17" height="13" rx="2.500" fill="#fff"/><rect x="7" y="31" width="15" height="14" rx="2.500" fill="#fff"/><rect x="32" y="31" width="15" height="14" rx="2.500" fill="#fff"/>'],
  [1, tile('#f2f0ec') + '<path d="M0 14v-1Q0 0 13 0h28q13 0 13 13v1z" fill="#f8cf46"/><path d="M0 16h54" stroke="#b9b4a8" stroke-width="1.500" stroke-dasharray="2 1.500"/><path d="M0 27h54M0 40h54" stroke="#d2cfc9" stroke-width="1.200"/>'],
  [1, tile('#f7f7f7') + chrome],
  [1, tile('url(#ma)') + '<rect x="8" y="15" width="38" height="25" rx="3" fill="#f3f4f6"/><path d="M8 17l19 15 19-15M8 39l14-12M46 39L32 27" fill="none" stroke="#9c9ea2" stroke-width="1.500"/>'],
  [1, tile('#fdfdfd') + '<circle cx="41" cy="15" r="4.500" fill="#5159c4"/><circle cx="29" cy="14" r="6" fill="#7b83eb"/><path d="M34 22h13v12q0 8-7 8-6-1-6-8z" fill="#5159c4"/><path d="M20 22h18v14q0 9-9 9t-9-9z" fill="#7b83eb"/><rect x="7" y="19" width="20" height="19" rx="2" fill="#4b53bc"/><text x="17" y="34" font-size="15" font-weight="700" text-anchor="middle" fill="#fff">T</text>'],
  [1, tile('#f1efee') + '<rect x="4" y="4" width="45" height="46" rx="7" fill="#98b7ea"/><path d="M4 30h45v14q0 6-7 6H11q-7 0-7-6z" fill="#1f3a66"/><path d="M4 42l12-4 10 5 5 7H11q-7 0-7-6z" fill="#dce5ee"/><path d="M28 36h22l5 18q0 3-3 3H26q-3 0-2-3z" fill="#b9bcc0" stroke="#f2f2f2"/><rect x="27" y="26" width="25" height="13" rx="4" fill="#111"/><circle cx="38" cy="48" r="5" fill="#3d4247"/>']
];
const cell = ([run, art]) => `<div class="relative flex w-[72.700px] shrink-0 flex-col items-center"><svg class="overflow-visible" width="54" height="55" viewBox="0 0 54 55" font-family="Inter">${art}</svg>${run ? '<i class="mt-[9px] h-[8px] w-[8px] rounded-full bg-black"></i>' : ''}</div>`;
const badge = '<svg class="absolute right-0 -bottom-[12px]" width="21" height="21" viewBox="0 0 54 54"><rect width="54" height="54" rx="12" fill="#fff"/>' + chrome + '</svg>';
document.getElementById('dock').innerHTML =
  `<svg class="absolute" width="0" height="0"><defs>
   <linearGradient id="fi" x2="0" y2="1"><stop stop-color="#5fc4f8"/><stop offset="1" stop-color="#2d68ea"/></linearGradient>
   <linearGradient id="gr" x2="0" y2="1"><stop stop-color="#85ee78"/><stop offset="1" stop-color="#48bd3f"/></linearGradient>
   <linearGradient id="sa" x2="0" y2="1"><stop stop-color="#45a6ef"/><stop offset="1" stop-color="#2b64d5"/></linearGradient>
   <linearGradient id="as" x2="0" y2="1"><stop stop-color="#4db2f1"/><stop offset="1" stop-color="#2a5bd8"/></linearGradient>
   <linearGradient id="se" x2="0" y2="1"><stop stop-color="#ced9df"/><stop offset="1" stop-color="#8d8c89"/></linearGradient>
   <linearGradient id="ca" x1="0" y1="0" x2=".7" y2="1"><stop stop-color="#46bcc6"/><stop offset=".5" stop-color="#4a8ed6"/><stop offset="1" stop-color="#6b32dd"/></linearGradient>
   <linearGradient id="ki" x2="0" y2="1"><stop stop-color="#3d7fae"/><stop offset="1" stop-color="#a3def2"/></linearGradient>
   <linearGradient id="ma" x2="0" y2="1"><stop stop-color="#3a6df0"/><stop offset="1" stop-color="#5bbdf7"/></linearGradient>
   <linearGradient id="tr" x2="0" y2="1"><stop stop-color="#c9c9c9"/><stop offset="1" stop-color="#ececec"/></linearGradient></defs></svg>`
  + apps.slice(0, 30).map(cell).join('')
  + '<i class="mx-[16px] h-[66px] w-[2px] shrink-0 bg-black/35"></i>'
  + apps.slice(30).map(cell).join('')
  + '<i class="mx-[16px] h-[66px] w-[2px] shrink-0 bg-black/35"></i>'
  + `<div class="relative mt-[9px] ml-[4px] h-[38px] w-[64px] shrink-0 bg-[#f3f4f6]"><svg width="64" height="38" viewBox="0 0 64 38"><path d="M0 0h64v3H0z" fill="#bcd0f2"/><path d="M6 8h20M9 14h12M9 20h12M9 26h12M9 32h12M46 12h10M46 20h10" stroke="#b4b6ba" stroke-width="1.500"/><path d="M9 14h3M9 20h3M9 26h3M46 12h3" stroke="#4b7a5a" stroke-width="2"/><path d="M28 5h14v33H28z" fill="#fff"/></svg>${badge}</div>`
  + `<div class="relative mt-[24px] ml-[9px] h-[8px] w-[62px] shrink-0 bg-[#f3f4f6]"><svg width="62" height="8" viewBox="0 0 62 8"><path d="M4 4h32" stroke="#999" stroke-width="1.500"/><rect x="40" y="1" width="14" height="6" rx="2" fill="#2f62cf"/></svg><svg class="absolute right-0 -bottom-[28px]" width="21" height="21" viewBox="0 0 54 54"><rect width="54" height="54" rx="12" fill="#fff"/>${chrome}</svg></div>`
  + `<svg class="-mt-[4px] ml-[16px] shrink-0" width="50" height="64" viewBox="0 0 50 64"><path d="M1 14h48l-5 44q-1 5-7 5H13q-6 0-7-5z" fill="url(#tr)"/><path d="M12 20l3 38M38 20l-3 38" stroke="#e2e2e2" stroke-width="4"/><path d="M3 15L7 3l8 4 6-6 8 5 8-5 5 8 5 6q-22 8-44 0z" fill="#e6e6e6"/><path d="M10 8l5 5M22 6l4 6M35 5l-4 8M41 10l-4 4M16 4l2 5M8 14l4-3M30 4l3 4" stroke="#3e4246" stroke-width="2.500"/><path d="M24 10l4 3" stroke="#4bbfd0" stroke-width="2.500"/><ellipse cx="25" cy="15" rx="24" ry="4" fill="none" stroke="#b4b4b4" stroke-width="1.500"/></svg>`;

/* unread badge for Messages */
document.querySelectorAll('#dock > div')[2].insertAdjacentHTML('beforeend', '<span class="absolute -top-[5px] left-[47px] flex h-[25px] w-[25px] items-center justify-center rounded-full bg-[#e8503f] text-[15px] text-white">6</span>');
</script>
</body>
</html>
